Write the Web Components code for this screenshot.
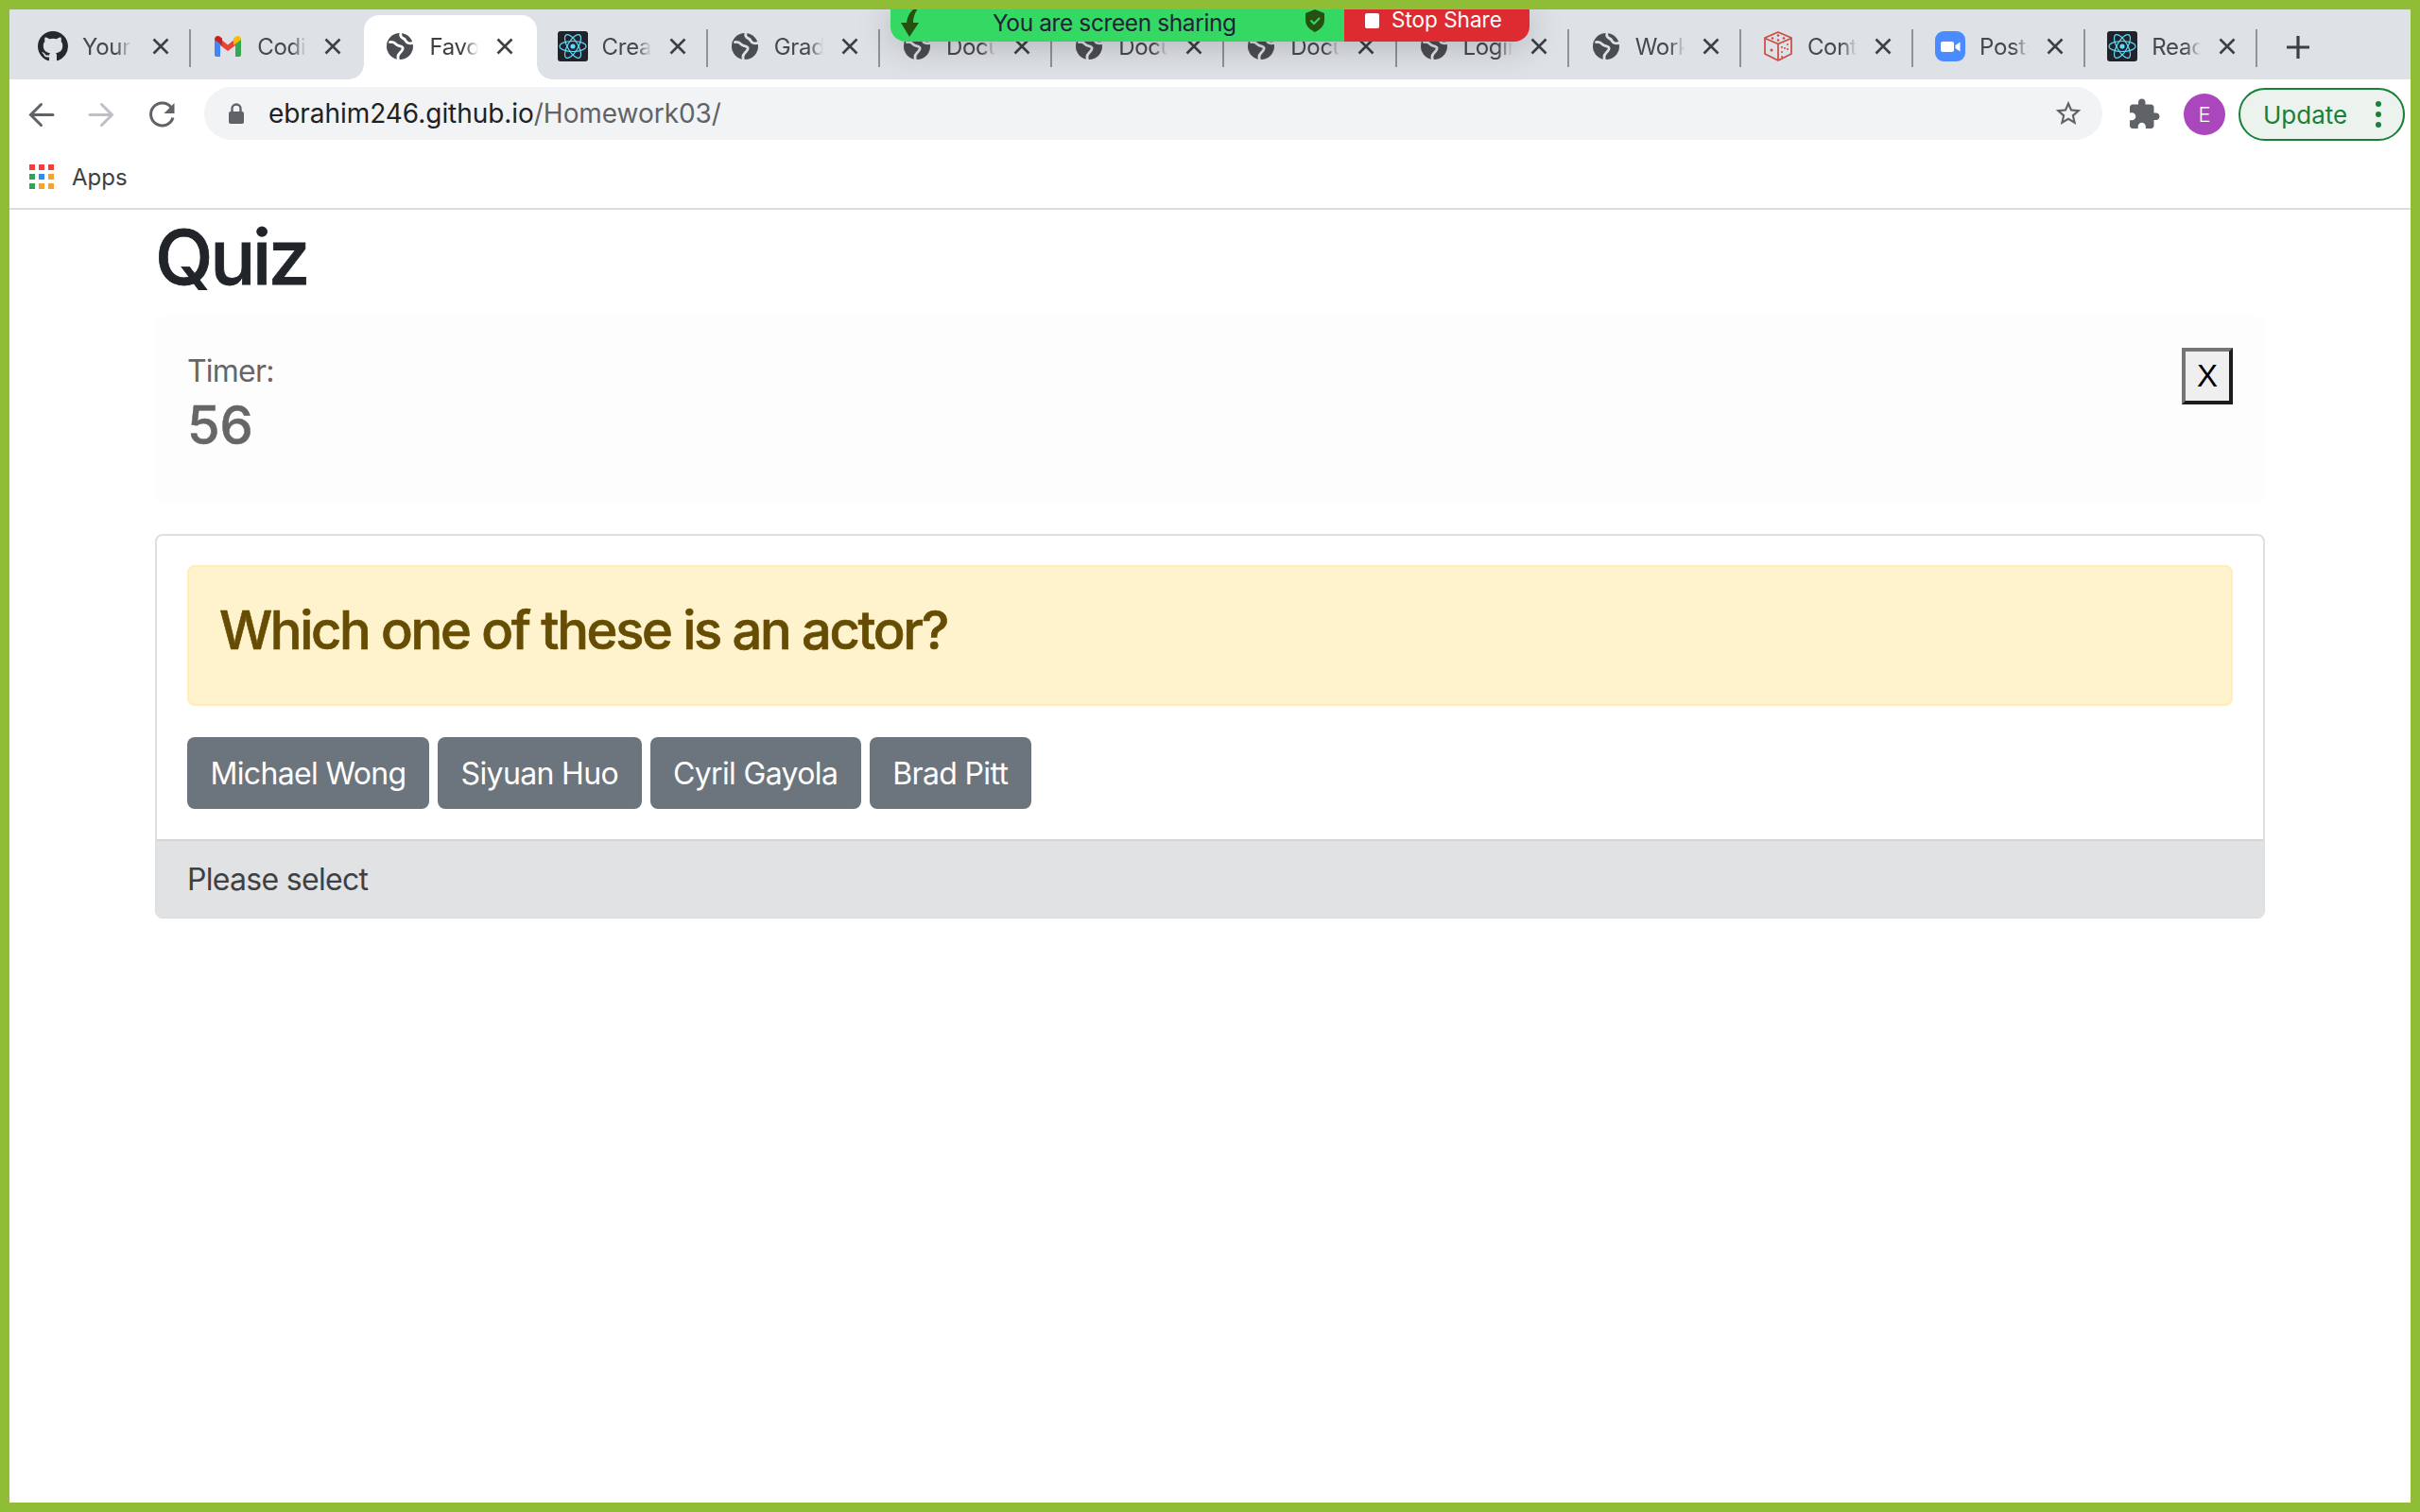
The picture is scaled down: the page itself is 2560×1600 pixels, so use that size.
<!DOCTYPE html>
<html><head><meta charset="utf-8"><style>html,body{margin:0;padding:0;background:#fff}</style></head><body>
<quiz-screen>
  <browser-chrome></browser-chrome>
  <share-banner></share-banner>
  <quiz-page></quiz-page>
</quiz-screen>
<script>
const ICONS={
globe:`<svg viewBox="0 0 32 32" width="28" height="28"><circle cx="16" cy="16" r="16" fill="var(--globe,#4a4d52)"/><path fill="none" stroke="var(--gap,#dee1e6)" stroke-width="3.200" stroke-linecap="round" d="M4 11c4-1 6 1 8 3s5 1 7 3-1 5-3 7-3 4-2 7"/><path fill="none" stroke="var(--gap,#dee1e6)" stroke-width="3.200" stroke-linecap="round" d="M17 1c-1 3 2 5 4 6s2 4 5 5 4 0 6 0"/></svg>`,
github:`<svg viewBox="0 0 16 16" width="32" height="32"><path fill="#24292e" d="M8 0C3.58 0 0 3.58 0 8c0 3.54 2.29 6.53 5.47 7.59.4.07.55-.17.55-.38 0-.19-.01-.82-.01-1.49-2.01.37-2.53-.49-2.69-.94-.09-.23-.48-.94-.82-1.13-.28-.15-.68-.52-.01-.53.63-.01 1.08.58 1.23.82.72 1.21 1.87.87 2.33.66.07-.52.28-.87.51-1.07-1.78-.2-3.64-.89-3.64-3.95 0-.87.31-1.59.82-2.15-.08-.2-.36-1.02.08-2.12 0 0 .67-.21 2.2.82.64-.18 1.32-.27 2-.27.68 0 1.36.09 2 .27 1.53-1.04 2.2-.82 2.2-.82.44 1.1.16 1.92.08 2.12.51.56.82 1.27.82 2.15 0 3.07-1.87 3.75-3.65 3.95.29.25.54.73.54 1.48 0 1.07-.01 1.93-.01 2.2 0 .21.15.46.55.38A8.013 8.013 0 0016 8c0-4.42-3.58-8-8-8z"/></svg>`,
gmail:`<svg viewBox="0 0 32 32" width="32" height="32"><path fill="#4285f4" d="M2 8h6v19H4a2 2 0 0 1-2-2z"/><path fill="#34a853" d="M24 8h6v17a2 2 0 0 1-2 2h-4z"/><path fill="#ea4335" d="M8 8l8 6.500L24 8v7l-8 6-8-6z"/><path fill="#c5221f" d="M2 9c0-3.500 3.500-5 6-3l2 1.600V15L2 9z"/><path fill="#fbbc04" d="M30 9c0-3.500-3.500-5-6-3l-2 1.600V15l8-6z"/></svg>`,
react:`<svg viewBox="0 0 32 32" width="32" height="32"><rect width="32" height="32" rx="3" fill="#20232a"/><g fill="none" stroke="#61dafb" stroke-width="1.200"><ellipse cx="16" cy="16" rx="14" ry="5.500"/><ellipse cx="16" cy="16" rx="14" ry="5.500" transform="rotate(60 16 16)"/><ellipse cx="16" cy="16" rx="14" ry="5.500" transform="rotate(120 16 16)"/></g><circle cx="16" cy="16" r="2.600" fill="#61dafb"/></svg>`,
dice:`<svg viewBox="0 0 32 32" width="32" height="32"><g fill="none" stroke="#cc4b3f" stroke-width="1.700" stroke-linejoin="round"><path d="M16 1L30 7V24L16 31 2 24V7z"/><path d="M2 7.500L16 13.500 30 7.500M16 13.500V31"/></g><g fill="#cc4b3f"><circle cx="16" cy="4.500" r="1.300"/><circle cx="10" cy="7.500" r="1.300"/><circle cx="22" cy="7.500" r="1.300"/><circle cx="16" cy="9.500" r="1.300"/><circle cx="9" cy="20" r="1.500"/><circle cx="20" cy="17" r="1"/><circle cx="26" cy="14" r="1"/><circle cx="20" cy="22" r="1"/><circle cx="26" cy="19" r="1"/><circle cx="23" cy="18" r="1"/><circle cx="20" cy="27" r="1"/></g></svg>`,
zoom:`<svg viewBox="0 0 32 32" width="32" height="32"><rect width="32" height="32" rx="9" fill="#4a8cff"/><rect x="6" y="11" width="14" height="11" rx="2" fill="#fff"/><path fill="#fff" d="M21.500 15l5-3.500v10l-5-3.500z"/></svg>`
};
const TABS=[["github","Your"],["gmail","Coding"],["globe","Favorites"],["react","Create"],["globe","Grades"],["globe","Documents"],["globe","Documents"],["globe","Documents"],["globe","Login"],["globe","Work"],["dice","Contact"],["zoom","Posts"],["react","React"]];

class BrowserTab extends HTMLElement{
  constructor(){super();const s=this.attachShadow({mode:"open"});
  const active=this.hasAttribute("active"),nosep=this.hasAttribute("nosep");
  s.innerHTML=`<style>
  :host{display:flex;box-sizing:border-box;width:182.200px;height:74px;align-items:center;position:relative;flex:none;font:24px Inter,sans-serif;letter-spacing:-.3px;color:#45484d}
  .sep{position:absolute;right:-1px;top:21px;height:40px;width:2px;background:#8f9296;display:${nosep?"none":"block"}}
  .in{display:flex;align-items:center;width:100%;height:100%;box-sizing:border-box;padding:4px 0 0 24px}
  :host([first]) .in{padding-left:21px}
  :host([first]) .x{margin-left:21px}
  .ic{width:32px;height:32px;display:flex;justify-content:center;align-items:center;flex:none}
  .t{margin-left:15px;width:52px;overflow:hidden;white-space:nowrap;flex:none;-webkit-mask-image:linear-gradient(90deg,#000 70%,transparent 100%);mask-image:linear-gradient(90deg,#000 70%,transparent 100%)}
  .x{margin-left:18px;flex:none;width:20px;height:20px;display:block}
  :host([active]) .bg{position:absolute;left:2px;right:-2px;top:6px;bottom:0;background:#fff;border-radius:16px 16px 0 0}
  :host([active]) .in{position:relative;color:#3c4043;--gap:#fff}
  :host([active]) .bg::before,:host([active]) .bg::after{content:"";position:absolute;bottom:0;width:16px;height:16px}
  :host([active]) .bg::before{left:-16px;background:radial-gradient(circle at 0 0,transparent 15.500px,#fff 16px)}
  :host([active]) .bg::after{right:-16px;background:radial-gradient(circle at 100% 0,transparent 15.500px,#fff 16px)}
  </style>${active?'<div class="bg"></div>':''}<div class="in"><span class="ic"><slot name="icon"></slot></span><span class="t"><slot></slot></span>
  <svg class="x" viewBox="0 0 20 20"><path d="M2.500 2.500L17.500 17.500M17.500 2.500L2.500 17.500" stroke="#3c4043" stroke-width="2.600" fill="none"/></svg></div><div class="sep"></div>`;}
}
customElements.define("browser-tab",BrowserTab);

class BrowserChrome extends HTMLElement{
  constructor(){super();const s=this.attachShadow({mode:"open"});
  const tabs=TABS.map(([i,t],n)=>`<browser-tab ${n==0?"first":""} ${n==2?"active":""} ${(n==1||n==2)?"nosep":""}><span slot="icon" style="display:flex">${ICONS[i]}</span>${t}</browser-tab>`).join("");
  s.innerHTML=`<style>
  :host{display:block;font-family:Inter,sans-serif}
  .strip{height:74px;background:#dee1e6;display:flex;padding-left:9px;box-sizing:border-box;align-items:stretch}
  .plus{margin-left:32px;align-self:center;width:24px;height:24px;flex:none;margin-top:6px}
  .bar{height:74px;background:#fff;display:flex;align-items:center;padding:0 0 0 18px;box-sizing:border-box}
  .nav{display:flex;gap:34px;align-items:center;flex:none;width:188px}
  .omni{flex:none;width:2008px;height:56px;background:#f1f3f4;border-radius:28px;display:flex;align-items:center;box-sizing:border-box;padding:0 22px 0 24px;font-size:28px;color:#5f6368;margin-top:-2px}
  .omni b{font-weight:400;color:#202124}
  .lock{margin-right:24px;flex:none}
  .u{flex:1;letter-spacing:-.05px}
  .tools{display:flex;align-items:center;margin-left:26px}
  .av{width:44px;height:44px;border-radius:50%;background:#aa47bc;color:#fff;font-size:22px;display:flex;align-items:center;justify-content:center;margin-left:24px;margin-right:14px;font-weight:300}
  .upd{width:176px;height:56px;box-sizing:border-box;border:2px solid #188038;border-radius:28px;background:#ecf3ee;color:#188038;font-size:26px;display:flex;align-items:center;padding-left:24px;position:relative}
  .upd svg{position:absolute;right:21px;top:11px}
  .bm{background:#fff;display:flex;align-items:center;padding:0 0 4px 21px;font-size:24px;color:#3c4043;border-bottom:2px solid #dcdce2;box-sizing:border-box;height:64px}
  .bm svg{margin-right:19px}
  </style>
  <div class="strip">${tabs}<svg class="plus" viewBox="0 0 24 24"><path d="M12 0V24M0 12H24" stroke="#3c4043" stroke-width="3.200"/></svg></div>
  <div class="bar"><div class="nav">
    <svg width="30" height="30" viewBox="0 0 30 30"><path d="M28 15.500H5M15.500 4.500L4.500 15.500l11 11" fill="none" stroke="#5f6368" stroke-width="3" stroke-linecap="round"/></svg>
    <svg width="30" height="30" viewBox="0 0 30 30"><path d="M3 15.500h23M15.500 4.500l11 11-11 11" fill="none" stroke="#bdc1c6" stroke-width="3" stroke-linecap="round"/></svg>
    <svg width="30" height="30" viewBox="0 0 30 30"><path d="M25 7.500A12 12 0 1 0 27 18.500" fill="none" stroke="#5f6368" stroke-width="3"/><path d="M28.500 3v11H17.500z" fill="#5f6368"/></svg>
  </div>
  <div class="omni"><svg class="lock" width="20" height="24" viewBox="0 0 20 24"><path d="M5.500 11V7a4.500 4.500 0 0 1 9 0v4" fill="none" stroke="#5f6368" stroke-width="2.400"/><rect x="2" y="10" width="16" height="13" rx="2" fill="#5f6368"/></svg><span class="u"><b>ebrahim246.github.io</b>/Homework03/</span>
    <svg width="32" height="32" viewBox="0 0 24 24" style="margin-right:-2px"><path d="M22 9.240l-7.190-.62L12 2 9.190 8.630 2 9.240l5.460 4.730L5.820 21 12 17.270 18.180 21l-1.630-7.030L22 9.240zM12 15.400l-3.760 2.270 1-4.280-3.320-2.880 4.380-.38L12 6.100l1.710 4.040 4.380.38-3.320 2.880 1 4.280L12 15.400z" fill="#5f6368"/></svg></div>
  <div class="tools">
    <svg width="36" height="36" viewBox="0 0 24 24"><path fill="#5f6368" d="M20.500 11H19V7c0-1.100-.9-2-2-2h-4V3.500C13 2.120 11.880 1 10.500 1S8 2.120 8 3.500V5H4c-1.100 0-1.990.9-1.990 2v3.800H3.500c1.490 0 2.700 1.210 2.700 2.700s-1.210 2.700-2.700 2.700H2V20c0 1.100.9 2 2 2h3.800v-1.500c0-1.490 1.210-2.700 2.700-2.700 1.490 0 2.700 1.210 2.700 2.700V22H17c1.100 0 2-.9 2-2v-4h1.500c1.380 0 2.500-1.120 2.500-2.500S21.880 11 20.500 11z"/></svg>
    <div class="av">E</div>
    <div class="upd">Update<svg width="10" height="30" viewBox="0 0 10 30"><circle cx="5" cy="4" r="3" fill="#188038"/><circle cx="5" cy="15" r="3" fill="#188038"/><circle cx="5" cy="26" r="3" fill="#188038"/></svg></div>
  </div></div>
  <div class="bm"><svg width="26" height="26" viewBox="0 0 26 26">
   ${[["#f43c3c","#f43c3c","#f43c3c"],["#34a05a","#2b8ef0","#f4a32c"],["#34a05a","#f4a32c","#f4a32c"]].map((r,y)=>r.map((c,x)=>`<rect x="${x*10}" y="${y*10}" width="6" height="6" fill="${c}"/>`).join("")).join("")}</svg>Apps</div>`;}
}
customElements.define("browser-chrome",BrowserChrome);

class ShareBanner extends HTMLElement{
  constructor(){super();this.attachShadow({mode:"open"}).innerHTML=`<style>
  :host{position:absolute;left:932px;top:0;width:676px;height:34px;display:flex;border-radius:0 0 16px 16px;box-shadow:0 4px 36px rgba(0,0,0,.22);overflow:hidden;font:25px Inter,"Liberation Sans",sans-serif}
  .g{width:480px;background:#33d963;color:#241f3a;display:flex;align-items:center;box-sizing:border-box;padding-left:11px;height:34px}
  .t{margin-left:73px;margin-top:-7px;width:258px;white-space:nowrap;flex:none;font-size:24.500px;letter-spacing:-.4px;line-height:28px}
  .sh{margin-left:73px;margin-top:-10px}
  .arr{margin-top:-10px}
  .r{flex:1;background:#de2b31;color:#fff;display:flex;align-items:flex-start;padding-left:22px;box-sizing:border-box;font-size:22.500px}
  .r i{display:block;width:15px;height:16px;background:#fff;margin-top:4px;margin-right:13px;border-radius:2px;flex:none}
  .r span{line-height:22px}
  </style>
  <div class="g"><svg class="arr" width="24" height="34" viewBox="0 0 24 34"><path fill="#25500f" d="M23 0C16 4 13 12 13 19h6L9 34 0 19h6C7 10 13 2 23 0z"/></svg><span class="t">You are screen sharing</span>
  <svg class="sh" width="20" height="24" viewBox="0 0 20 24"><path fill="#25500f" d="M10 0l10 4v7c0 6-4 10-10 13C4 21 0 17 0 11V4z"/><path d="M5.500 11.500l3.500 3.500 6-6" stroke="#33d963" stroke-width="2" fill="none"/></svg></div>
  <div class="r"><i></i><span>Stop Share</span></div>`;}
}
customElements.define("share-banner",ShareBanner);

class QuizButton extends HTMLElement{
  constructor(){super();this.attachShadow({mode:"open"}).innerHTML=`<style>
  :host{display:block;flex:none}
  button{display:block;height:76px;padding:2px 24.500px 0;border:0;border-radius:8px;background:#6c757d;color:#fff;font:32px Inter,sans-serif;letter-spacing:-.65px;line-height:74px;white-space:nowrap}
  </style><button><slot></slot></button>`;}
}
customElements.define("quiz-button",QuizButton);

class QuizPage extends HTMLElement{
  constructor(){super();this.attachShadow({mode:"open"}).innerHTML=`<style>
  :host{display:block;padding:0 154px;font-family:Inter,sans-serif;color:#212529}
  h1{margin:0;font-size:80px;font-weight:500;line-height:99px;height:112px;box-sizing:border-box;letter-spacing:-3.300px;-webkit-text-stroke:.8px #212529}
  .timer{height:197px;background:#fdfdfd;border-radius:12px;box-sizing:border-box;padding:34px;display:flex;justify-content:space-between;align-items:flex-start;color:#666}
  .lb{font-size:32px;line-height:48px;margin-top:1px;letter-spacing:-.8px}
  .n{font-size:56px;line-height:66px;font-weight:500;-webkit-text-stroke:.5px #666}
  .close{width:54px;height:60px;box-sizing:border-box;border:4px solid;border-color:#767676 #1c1c1c #1c1c1c #767676;background:#efefef;color:#000;font:33px "Liberation Sans",sans-serif;padding:0;display:block}
  .card{margin-top:34px;height:407px;box-sizing:border-box;border:2px solid #dfdfdf;border-radius:8px;display:flex;flex-direction:column;overflow:hidden;background:#fff}
  .body{flex:1;padding:31px 32px 0}
  .alert{height:149px;box-sizing:border-box;background:#fff3cd;border:2px solid #ffeeba;border-radius:8px;padding:34px 32px 0;font-size:56px;font-weight:500;line-height:66px;color:#664d03;letter-spacing:-2.300px;-webkit-text-stroke:.7px #664d03}
  .btns{display:flex;gap:9px;margin-top:33px}
  .foot{height:82px;background:#e1e2e4;border-top:2px solid #d3d5d8;box-sizing:border-box;padding:0 32px;line-height:82px;font-size:32px;color:#3d4145;letter-spacing:-.7px}
  </style>
  <h1>Quiz</h1>
  <div class="timer"><div><div class="lb">Timer:</div><div class="n">56</div></div><button class="close">X</button></div>
  <div class="card"><div class="body"><div class="alert">Which one of these is an actor?</div>
   <div class="btns"><quiz-button>Michael Wong</quiz-button><quiz-button>Siyuan Huo</quiz-button><quiz-button>Cyril Gayola</quiz-button><quiz-button>Brad Pitt</quiz-button></div></div>
   <div class="foot">Please select</div></div>`;}
}
customElements.define("quiz-page",QuizPage);

class QuizScreen extends HTMLElement{
  constructor(){super();this.attachShadow({mode:"open"}).innerHTML=`<style>
  :host{display:block;position:relative;box-sizing:border-box;width:2560px;height:1600px;border:10px solid #8fbe36;background:#fff;overflow:hidden}
  </style><slot></slot>`;}
}
customElements.define("quiz-screen",QuizScreen);
</script></body></html>
